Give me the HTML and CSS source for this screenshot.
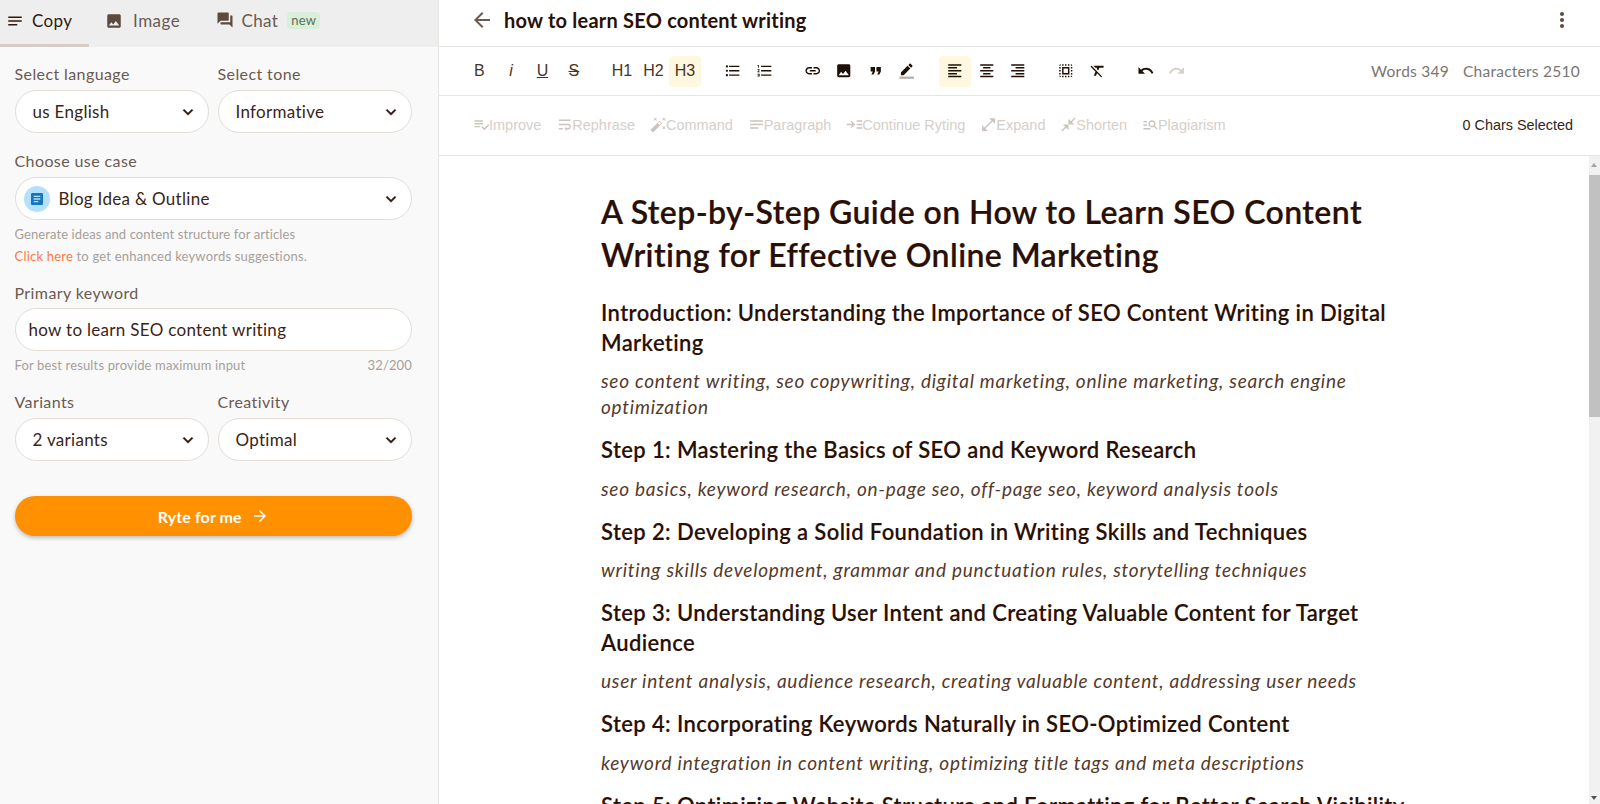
FILE: index.html
```html
<!DOCTYPE html>
<html lang="en">
<head>
<meta charset="utf-8">
<title>how to learn SEO content writing</title>
<link rel="stylesheet" href="styles.css">
</head>
<body>
<svg class="defs" aria-hidden="true">
<symbol id="notes" viewBox="0 0 24 24"><path d="M3 18h12v-2H3v2zM3 6v2h18V6H3zm0 7h18v-2H3v2z"/></symbol>
<symbol id="image" viewBox="0 0 24 24"><path d="M21 19V5c0-1.1-.9-2-2-2H5c-1.1 0-2 .9-2 2v14c0 1.1.9 2 2 2h14c1.1 0 2-.9 2-2zM8.5 13.5l2.5 3.01L14.5 12l4.5 6H5l3.5-4.5z"/></symbol>
<symbol id="forum" viewBox="0 0 24 24"><path d="M21 6h-2v9H6v2c0 .55.45 1 1 1h11l4 4V7c0-.55-.45-1-1-1zm-4 6V3c0-.55-.45-1-1-1H3c-.55 0-1 .45-1 1v14l4-4h10c.55 0 1-.45 1-1z"/></symbol>
<symbol id="chev" viewBox="0 0 24 24"><path d="M16.59 8.59L12 13.17 7.41 8.59 6 10l6 6 6-6z"/></symbol>
<symbol id="article" viewBox="0 0 24 24"><path d="M19 3H5c-1.1 0-2 .9-2 2v14c0 1.1.9 2 2 2h14c1.1 0 2-.9 2-2V5c0-1.1-.9-2-2-2zm-5 14H7v-2h7v2zm3-4H7v-2h10v2zm0-4H7V7h10v2z"/></symbol>
<symbol id="back" viewBox="0 0 24 24"><path d="M20 11H7.83l5.59-5.59L12 4l-8 8 8 8 1.41-1.41L7.83 13H20v-2z"/></symbol>
<symbol id="forward" viewBox="0 0 24 24"><path d="M12 4l-1.41 1.41L16.17 11H4v2h12.17l-5.58 5.59L12 20l8-8z"/></symbol>
<symbol id="kebab" viewBox="0 0 24 24"><path d="M12 8c1.1 0 2-.9 2-2s-.9-2-2-2-2 .9-2 2 .9 2 2 2zm0 2c-1.1 0-2 .9-2 2s.9 2 2 2 2-.9 2-2-.9-2-2-2zm0 6c-1.1 0-2 .9-2 2s.9 2 2 2 2-.9 2-2-.9-2-2-2z"/></symbol>
<symbol id="ul" viewBox="0 0 24 24"><path d="M4 10.5c-.83 0-1.5.67-1.5 1.5s.67 1.5 1.5 1.5 1.5-.67 1.5-1.5-.67-1.5-1.5-1.5zm0-6c-.83 0-1.5.67-1.5 1.5S3.17 7.5 4 7.5 5.5 6.83 5.5 6 4.83 4.5 4 4.5zm0 12c-.83 0-1.5.68-1.5 1.5s.68 1.5 1.5 1.5 1.5-.68 1.5-1.5-.67-1.5-1.5-1.5zM7 19h14v-2H7v2zm0-6h14v-2H7v2zm0-8v2h14V5H7z"/></symbol>
<symbol id="ol" viewBox="0 0 24 24"><path d="M2 17h2v.5H3v1h1v.5H2v1h3v-4H2v1zm1-9h1V4H2v1h1v3zm-1 3h1.8L2 13.1v.9h3v-1H3.2L5 10.9V10H2v1zm5-6v2h14V5H7zm0 14h14v-2H7v2zm0-6h14v-2H7v2z"/></symbol>
<symbol id="link" viewBox="0 0 24 24"><path d="M3.9 12c0-1.71 1.39-3.1 3.1-3.1h4V7H7c-2.76 0-5 2.24-5 5s2.24 5 5 5h4v-1.9H7c-1.71 0-3.1-1.39-3.1-3.1zM8 13h8v-2H8v2zm9-6h-4v1.9h4c1.71 0 3.1 1.39 3.1 3.1s-1.39 3.1-3.1 3.1h-4V17h4c2.76 0 5-2.24 5-5s-2.24-5-5-5z"/></symbol>
<symbol id="quote" viewBox="0 0 24 24"><path d="M6 17h3l2-4V7H5v6h3zm8 0h3l2-4V7h-6v6h3z"/></symbol>
<symbol id="left" viewBox="0 0 24 24"><path d="M15 15H3v2h12v-2zm0-8H3v2h12V7zM3 13h18v-2H3v2zm0 8h18v-2H3v2zM3 3v2h18V3H3z"/></symbol>
<symbol id="center" viewBox="0 0 24 24"><path d="M7 15v2h10v-2H7zm-4 6h18v-2H3v2zm0-8h18v-2H3v2zm4-6v2h10V7H7zM3 3v2h18V3H3z"/></symbol>
<symbol id="right" viewBox="0 0 24 24"><path d="M3 21h18v-2H3v2zm6-4h12v-2H9v2zm-6-4h18v-2H3v2zm6-4h12V7H9v2zM3 3v2h18V3H3z"/></symbol>
<symbol id="selectall" viewBox="0 0 24 24"><path d="M3 5h2V3c-1.1 0-2 .9-2 2zm0 8h2v-2H3v2zm4 8h2v-2H7v2zM3 9h2V7H3v2zm10-6h-2v2h2V3zm6 0v2h2c0-1.1-.9-2-2-2zM5 21v-2H3c0 1.1.9 2 2 2zm-2-4h2v-2H3v2zM9 3H7v2h2V3zm2 18h2v-2h-2v2zm8-8h2v-2h-2v2zm0 8c1.1 0 2-.9 2-2h-2v2zm0-12h2V7h-2v2zm0 8h2v-2h-2v2zm-4 4h2v-2h-2v2zm0-16h2V3h-2v2zM7 17h10V7H7v10zm2-8h6v6H9V9z"/></symbol>
<symbol id="clear" viewBox="0 0 24 24"><path d="M3.27 5L2 6.27l6.97 6.97L6.5 19h3l1.57-3.66L16.73 21 18 19.73 3.55 5.27 3.27 5zM6 5v.18L8.82 8h2.4l-.72 1.68 2.1 2.1L14.21 8H20V5H6z"/></symbol>
<symbol id="undo" viewBox="0 0 24 24"><path d="M12.5 8c-2.65 0-5.05.99-6.9 2.6L2 7v9h9l-3.62-3.62c1.39-1.16 3.16-1.88 5.12-1.88 3.54 0 6.55 2.31 7.6 5.5l2.37-.78C21.08 11.03 17.15 8 12.5 8z"/></symbol>
<symbol id="redo" viewBox="0 0 24 24"><path d="M18.4 10.6C16.55 8.99 14.15 8 11.5 8c-4.65 0-8.58 3.03-9.96 7.22L3.9 16c1.05-3.19 4.05-5.5 7.6-5.5 1.95 0 3.73.72 5.12 1.88L13 16h9V7l-3.6 3.6z"/></symbol>
<symbol id="improve" viewBox="0 0 24 24"><path d="M14 10H2v2h12v-2zm0-4H2v2h12V6zM2 16h8v-2H2v2zm19.5-4.5L23 13l-6.99 7-4.51-4.5L13 14l3.01 3 5.49-5.5z"/></symbol>
<symbol id="rephrase" viewBox="0 0 24 24"><path d="M4 19h6v-2H4v2zM20 5H4v2h16V5zm-3 6H4v2h13.25c1.1 0 2 .9 2 2s-.9 2-2 2H15v-2l-3 3 3 3v-2h2c2.21 0 4-1.79 4-4s-1.79-4-4-4z"/></symbol>
<symbol id="wand" viewBox="0 0 24 24"><path d="M7.5 5.6L10 7 8.6 4.5 10 2 7.5 3.4 5 2l1.4 2.5L5 7zm12 9.8L17 14l1.4 2.5L17 19l2.5-1.4L22 19l-1.4-2.5L22 14zM22 2l-2.5 1.4L17 2l1.4 2.5L17 7l2.5-1.4L22 7l-1.4-2.5zm-7.63 5.29c-.39-.39-1.02-.39-1.41 0L1.29 18.96c-.39.39-.39 1.02 0 1.41l2.34 2.34c.39.39 1.02.39 1.41 0L16.7 11.05c.39-.39.39-1.02 0-1.41l-2.33-2.35zm-1.03 5.49l-2.12-2.12 2.44-2.44 2.12 2.12-2.44 2.44z"/></symbol>
<symbol id="continue" viewBox="0 0 24 24"><path d="M1 11h8.2L6.6 8.4 8 7l5 5-5 5-1.400-1.400L9.200 13H1v-2zM15 6h8v2h-8V6zm0 5h8v2h-8v-2zm0 5h8v2h-8v-2z"/></symbol>
<symbol id="expand" viewBox="0 0 24 24"><path d="M21 11V3h-8l3.29 3.29-10 10L3 13v8h8l-3.29-3.29 10-10z"/></symbol>
<symbol id="shorten" viewBox="0 0 24 24"><path d="M22 3.41l-5.29 5.29L20 12h-8V4l3.29 3.29L20.59 2 22 3.41zM3.41 22l5.29-5.29L12 20v-8H4l3.29 3.29L2 20.59 3.41 22z"/></symbol>
<symbol id="search" viewBox="0 0 24 24"><path d="M7 9H2V7h5v2zm0 3H2v2h5v-2zm13.590 7l-3.830-3.830c-.8.52-1.740.83-2.760.83-2.760 0-5-2.240-5-5s2.240-5 5-5 5 2.240 5 5c0 1.020-.31 1.960-.83 2.750L22 17.590 20.590 19zM17 11c0-1.650-1.350-3-3-3s-3 1.350-3 3 1.350 3 3 3 3-1.350 3-3zM2 19h10v-2H2v2z"/></symbol>
</svg>

<div class="app">
  <aside class="side">
    <nav class="tabs">
      <div class="tab tab-copy"><svg class="tab-ico dark"><use href="#notes"/></svg><span>Copy</span></div>
      <div class="tab tab-image"><svg class="tab-ico"><use href="#image"/></svg><span>Image</span></div>
      <div class="tab tab-chat"><svg class="tab-ico"><use href="#forum"/></svg><span>Chat</span><span class="badge">new</span></div>
    </nav>
    <form class="form">
      <div class="two">
        <div class="field"><label class="lbl">Select language</label><div class="select"><span class="val">us English</span><svg class="chev"><use href="#chev"/></svg></div></div>
        <div class="field"><label class="lbl">Select tone</label><div class="select"><span class="val">Informative</span><svg class="chev"><use href="#chev"/></svg></div></div>
      </div>
      <div class="field usecase">
        <label class="lbl">Choose use case</label>
        <div class="select select-case"><span class="bubble"><svg class="art"><use href="#article"/></svg></span><span class="val">Blog Idea &amp; Outline</span><svg class="chev"><use href="#chev"/></svg></div>
        <p class="hint h1st">Generate ideas and content structure for articles</p>
        <p class="hint h2nd"><a class="click">Click here</a> to get enhanced keywords suggestions.</p>
      </div>
      <div class="field keyword">
        <label class="lbl">Primary keyword</label>
        <div class="select input"><span class="val kw">how to learn SEO content writing</span></div>
        <p class="hint row"><span>For best results provide maximum input</span><span>32/200</span></p>
      </div>
      <div class="two variants">
        <div class="field"><label class="lbl">Variants</label><div class="select"><span class="val">2 variants</span><svg class="chev"><use href="#chev"/></svg></div></div>
        <div class="field"><label class="lbl">Creativity</label><div class="select"><span class="val">Optimal</span><svg class="chev"><use href="#chev"/></svg></div></div>
      </div>
      <button type="button" class="ryte">Ryte for me<svg class="ryte-ico"><use href="#forward"/></svg></button>
    </form>
  </aside>

  <main class="main">
    <header class="head">
      <svg class="backico"><use href="#back"/></svg>
      <h2 class="title">how to learn SEO content writing</h2>
      <svg class="kebab"><use href="#kebab"/></svg>
    </header>

    <div class="toolbar">
      <div class="grp"><span class="tb b">B</span><span class="tb i">i</span><span class="tb u">U</span><span class="tb s">S</span></div>
      <div class="grp"><span class="tb hd">H1</span><span class="tb hd">H2</span><span class="tb hd on">H3</span></div>
      <div class="grp"><span class="tb"><svg class="ti"><use href="#ul"/></svg></span><span class="tb"><svg class="ti"><use href="#ol"/></svg></span></div>
      <div class="grp"><span class="tb"><svg class="ti"><use href="#link"/></svg></span><span class="tb"><svg class="ti"><use href="#image"/></svg></span><span class="tb"><svg class="ti"><use href="#quote"/></svg></span><span class="tb"><svg class="ti" viewBox="0 0 24 24"><path d="M13.06 5.19l3.75 3.75L7.75 18H4v-3.750l9.060-9.060zm4.820 2.680l-3.750-3.750 1.830-1.830c.39-.39 1.020-.39 1.410 0l2.340 2.340c.39.39.39 1.020 0 1.410l-1.830 1.830z"/><path class="penbar" d="M2 20h20v3H2z"/></svg></span></div>
      <div class="grp"><span class="tb on"><svg class="ti"><use href="#left"/></svg></span><span class="tb"><svg class="ti"><use href="#center"/></svg></span><span class="tb"><svg class="ti"><use href="#right"/></svg></span></div>
      <div class="grp"><span class="tb"><svg class="ti"><use href="#selectall"/></svg></span><span class="tb"><svg class="ti"><use href="#clear"/></svg></span></div>
      <div class="grp"><span class="tb"><svg class="ti"><use href="#undo"/></svg></span><span class="tb"><svg class="ti off"><use href="#redo"/></svg></span></div>
      <div class="counts"><span>Words 349</span><span>Characters 2510</span></div>
    </div>

    <div class="actions">
      <span class="act"><svg class="ai"><use href="#improve"/></svg>Improve</span>
      <span class="act"><svg class="ai"><use href="#rephrase"/></svg>Rephrase</span>
      <span class="act"><svg class="ai"><use href="#wand"/></svg>Command</span>
      <span class="act"><svg class="ai"><use href="#notes"/></svg>Paragraph</span>
      <span class="act"><svg class="ai"><use href="#continue"/></svg>Continue Ryting</span>
      <span class="act"><svg class="ai"><use href="#expand"/></svg>Expand</span>
      <span class="act"><svg class="ai"><use href="#shorten"/></svg>Shorten</span>
      <span class="act"><svg class="ai"><use href="#search"/></svg>Plagiarism</span>
      <span class="sel">0 Chars Selected</span>
    </div>

    <div class="editor-wrap">
      <article class="doc">
        <h1>A Step-by-Step Guide on How to Learn SEO Content Writing for Effective Online Marketing</h1>
        <h3>Introduction: Understanding the Importance of SEO Content Writing in Digital Marketing</h3>
        <p>seo content writing, seo copywriting, digital marketing, online marketing, search engine optimization</p>
        <h3>Step 1: Mastering the Basics of SEO and Keyword Research</h3>
        <p>seo basics, keyword research, on-page seo, off-page seo, keyword analysis tools</p>
        <h3>Step 2: Developing a Solid Foundation in Writing Skills and Techniques</h3>
        <p>writing skills development, grammar and punctuation rules, storytelling techniques</p>
        <h3>Step 3: Understanding User Intent and Creating Valuable Content for Target Audience</h3>
        <p>user intent analysis, audience research, creating valuable content, addressing user needs</p>
        <h3>Step 4: Incorporating Keywords Naturally in SEO-Optimized Content</h3>
        <p>keyword integration in content writing, optimizing title tags and meta descriptions</p>
        <h3>Step 5: Optimizing Website Structure and Formatting for Better Search Visibility</h3>
      </article>
      <div class="scrollbar"><span class="arrow up"></span><span class="thumb"></span><span class="arrow down"></span></div>
    </div>
  </main>
</div>
</body>
</html>
```

FILE: styles.css
```css
* { box-sizing: border-box; }
html, body { margin: 0; height: 100%; overflow: hidden; background: #fff; }
body { font-family: "Lato", "Noto Sans", sans-serif; color: #2a0f05; }
.defs { display: none; }
svg { fill: currentColor; display: block; flex: none; }
h1, h2, h3, p, label { margin: 0; }
.app { display: flex; height: 804px; }

/* sidebar */
.side { width: 439px; flex: none; background: #f9f9f9; border-right: 1px solid #e8e6e3; }
.tabs { display: flex; height: 47px; background: #eeeeee; color: #6b5a50; font-size: 17px; letter-spacing: .35px; }
.tab { display: flex; align-items: center; height: 47px; padding-bottom: 6px; }
.tab-copy { width: 89px; padding-left: 6px; color: #2f1a0e; border-bottom: 3px solid #d6cdc4; padding-bottom: 3px; }
.tab-image { padding-left: 16px; width: 123.5px; }
.tab-image span { letter-spacing: .5px; }
.tab-chat { padding-left: 3px; }
.tab-ico { width: 18px; height: 18px; margin-right: 8px; color: #5d4a3f; }
.tab-ico.dark { color: #2f1a0e; }
.tab-chat .tab-ico { margin-top: -2px; }
.tab-image .tab-ico { margin-right: 10px; }
.badge { margin-left: 9px; padding: 0 4px; height: 17px; line-height: 17px; border-radius: 4px; background: #d9efd9; color: #5c6f5c; font-size: 13px; letter-spacing: .3px; }

.form { padding: 17px 0 0 14.5px; width: 412px; }
.two { display: grid; grid-template-columns: 194.5px 194.5px; gap: 8.5px; }
.lbl { display: block; height: 26px; font-size: 16px; line-height: 20px; color: #6b5a50; letter-spacing: .4px; }
.select { display: flex; align-items: center; justify-content: space-between; height: 43px; padding: 0 10px 0 17px; border: 1px solid #e3dcd5; border-radius: 22px; background: #fff; }
.val { font-size: 17px; color: #3c2415; letter-spacing: .3px; }
.chev { width: 20px; height: 20px; color: #2a1a10; stroke: currentColor; stroke-width: .5px; }
.usecase { margin-top: 18px; }
.select-case { padding-left: 8px; justify-content: flex-start; }
.select-case .chev { margin-left: auto; }
.bubble { width: 26px; height: 26px; border-radius: 50%; background: #b3e1fb; display: flex; align-items: center; justify-content: center; margin-right: 9px; }
.art { width: 16px; height: 16px; color: #1676bb; }
.hint { font-size: 13px; line-height: 18px; color: #a5a09b; letter-spacing: .15px; }
.h1st { margin-top: 5px; letter-spacing: .1px; }
.h2nd { margin-top: 4px; letter-spacing: .2px; }
.click { color: #ff7a3c; }
.keyword { margin-top: 18px; }
.keyword .lbl { height: 25px; }
.input { padding-left: 13px; }
.row { display: flex; justify-content: space-between; margin-top: 5px; }
.variants { margin-top: 18px; }
.ryte { display: flex; align-items: center; justify-content: center; width: 397.5px; height: 40px; margin-top: 35px; border: 0; border-radius: 20px; background: #ff9000; color: #fff; font: 700 16px "Lato", sans-serif; letter-spacing: .1px; box-shadow: 0 2px 4px rgba(0,0,0,.25); }
.ryte-ico { width: 18px; height: 18px; margin-left: 9px; }

/* main */
.main { flex: 1; min-width: 0; display: flex; flex-direction: column; }
.head { display: flex; align-items: center; height: 47px; padding: 0 26px 7px 31px; border-bottom: 1px solid #e8e6e3; }
.backico { width: 24px; height: 24px; color: #6b5a50; }
.title { margin-left: 10px; font-size: 20px; font-weight: 700; color: #2a0f05; letter-spacing: .22px; }
.kebab { width: 24px; height: 24px; margin-left: auto; color: #5d4a3f; }

.toolbar { display: flex; align-items: center; height: 49px; padding: 0 20px 0 24.7px; border-bottom: 1px solid #e8e6e3; }
.grp { display: flex; margin-right: 16.5px; }
.tb { width: 31.5px; height: 31px; display: flex; align-items: center; justify-content: center; border-radius: 4px; font: 16px "Liberation Sans", sans-serif; color: #4a3426; }
.tb.on { background: #fff7e0; }
.tb.i { font-style: italic; }
.tb.u { text-decoration: underline; }
.tb.s { text-decoration: line-through; }
.ti { width: 17.5px; height: 17.5px; color: #1f0f05; }
.ti.off { color: #d6d0ca; }
.penbar { fill: #b5ada6; }
.counts { margin-left: auto; display: flex; gap: 14px; font-size: 15.5px; color: #7a7572; letter-spacing: .25px; }

.actions { display: flex; align-items: center; height: 60px; padding: 0 27px 2px 34px; border-bottom: 1px solid #e8e6e3; }
.act { display: flex; align-items: center; margin-right: 14.85px; font: 14.5px "Liberation Sans", sans-serif; color: #d6cfc9; }
.ai { width: 17px; height: 17px; margin-right: -1px; color: #cbc3bc; }
.sel { margin-left: auto; font: 14.4px "Liberation Sans", sans-serif; color: #33241a; }

.editor-wrap { flex: 1; min-height: 0; display: flex; overflow: hidden; }
.doc { flex: 1; padding: 34px 0 0 162px; overflow: hidden; }
.doc h1 { width: 800px; font-size: 32px; line-height: 43px; font-weight: 600; color: #2a0f05; letter-spacing: .42px; -webkit-text-stroke: .2px #2a0f05; margin-bottom: 22px; }
.doc h3 { width: 830px; font-size: 22px; line-height: 29.5px; font-weight: 600; color: #2a0f05; letter-spacing: .38px; -webkit-text-stroke: .1px #2a0f05; margin-bottom: 11px; }
.doc p { width: 800px; font-size: 19px; line-height: 26px; font-style: italic; color: #553a2c; letter-spacing: .75px; margin-bottom: 15px; }
.scrollbar { width: 11px; flex: none; background: #f1f1f1; display: flex; flex-direction: column; align-items: center; }
.thumb { display: block; width: 100%; height: 242px; background: #c1c1c1; }
.arrow { display: block; height: 19px; width: 100%; position: relative; }
.arrow.up::after, .arrow.down::after { content: ""; position: absolute; left: 2px; border-left: 3.5px solid transparent; border-right: 3.5px solid transparent; }
.arrow.up::after { top: 7px; border-bottom: 4px solid #a3a3a3; }
.arrow.down { margin-top: auto; }
.arrow.down::after { bottom: 4px; border-top: 4px solid #505050; }
```
